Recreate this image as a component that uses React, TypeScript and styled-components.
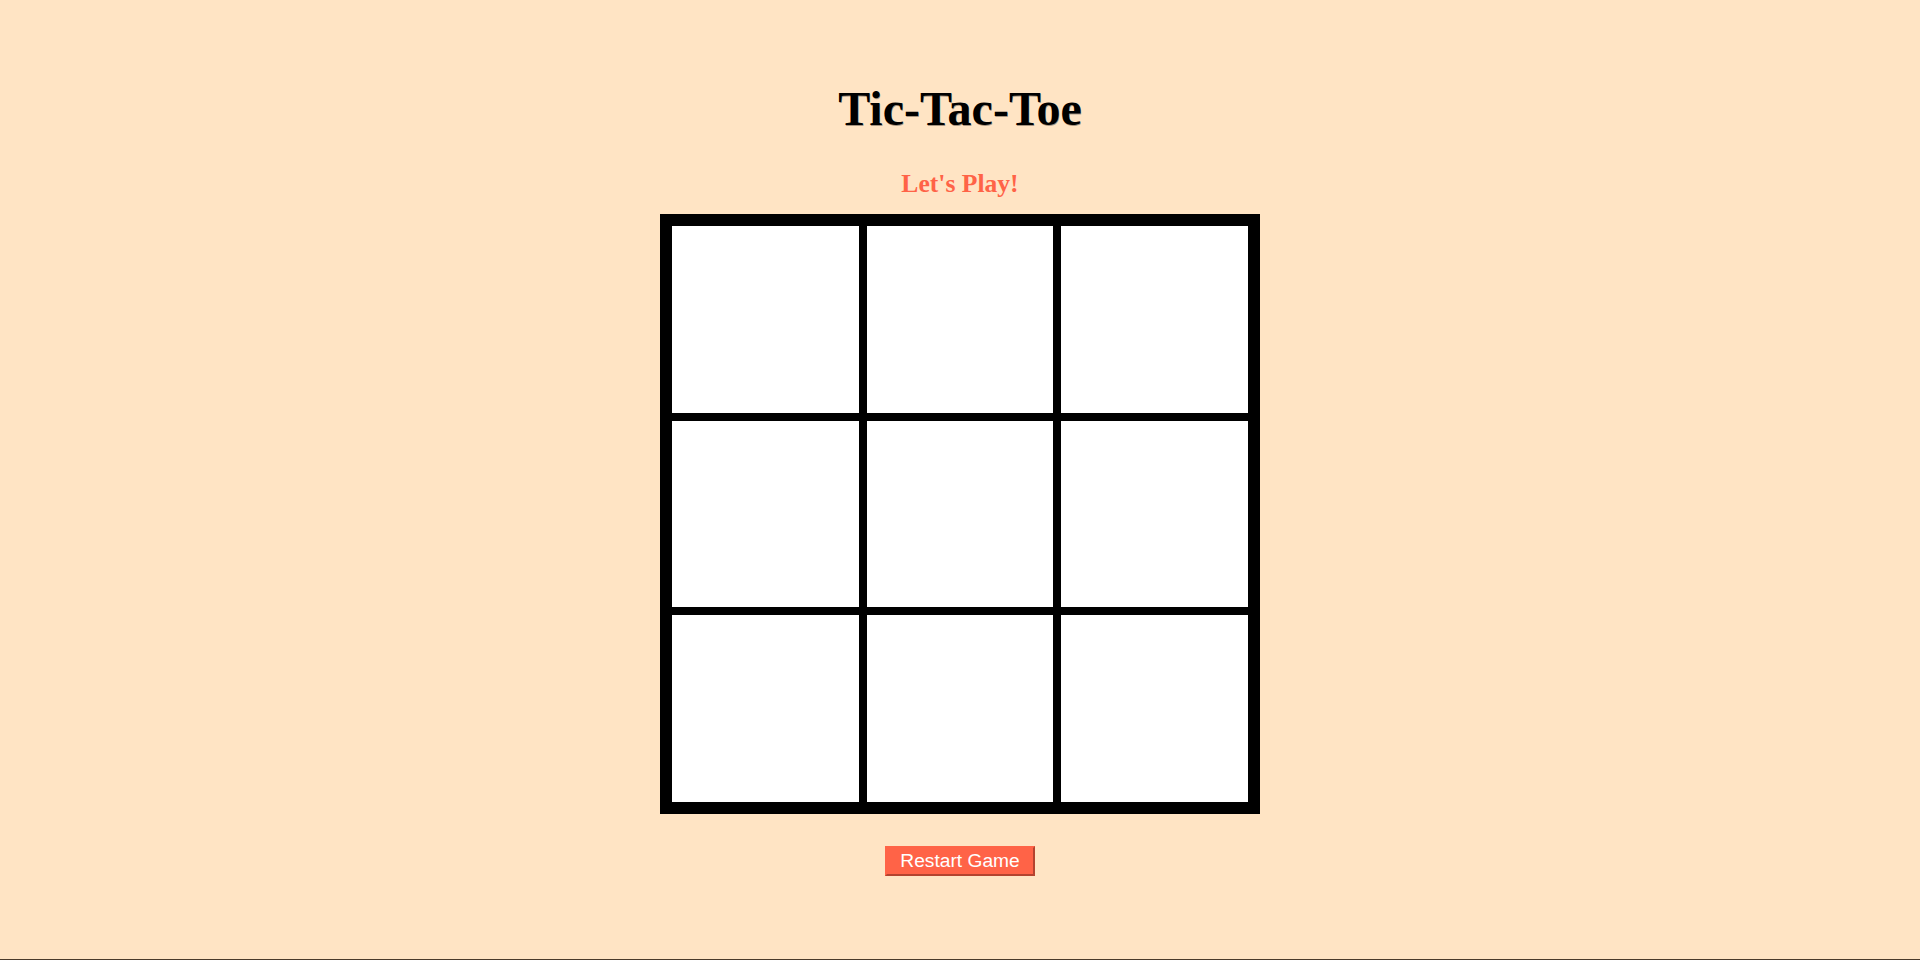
import React, { useState } from "react";
import styled, { createGlobalStyle } from "styled-components";

const GlobalStyle = createGlobalStyle`
  html, body {
    margin: 0;
    padding: 0;
    background: #ffe4c4;
  }
  * { box-sizing: border-box; }
`;

const Page = styled.div`
  min-height: 100vh;
  display: flex;
  flex-direction: column;
  align-items: center;
  padding-top: 81px;
  border-bottom: 1px solid #4a3a2a;
  background: #ffe4c4;
  font-family: "Liberation Serif", "Times New Roman", serif;
`;

const Title = styled.h1`
  margin: 0;
  font-size: 48px;
  line-height: 55px;
  font-weight: bold;
  color: #000;
  text-shadow: 0.5px 0.5px 0 rgba(0, 0, 0, 0.35);
`;

const Status = styled.h2`
  margin: 33px 0 0;
  font-size: 25.6px;
  line-height: 29px;
  font-weight: bold;
  color: #ff6347;
`;

const Board = styled.div`
  margin-top: 16px;
  width: 600px;
  height: 600px;
  border: 8px solid #000;
  display: grid;
  grid-template-columns: repeat(3, 1fr);
  grid-template-rows: repeat(3, 1fr);
`;

const Cell = styled.button<{ $mark: string }>`
  border: 4px solid #000;
  border-radius: 0;
  background: #fff;
  padding: 0;
  margin: 0;
  cursor: pointer;
  font-family: "Liberation Serif", serif;
  font-size: 96px;
  font-weight: bold;
  color: ${(p) => (p.$mark === "X" ? "#ff6347" : "#000")};
`;

const RestartButton = styled.button`
  margin-top: 32px;
  padding: 2px 13.5px;
  border-style: solid;
  border-width: 2px;
  border-color: #ff6347 #b4432f #b4432f #ff6347;
  border-radius: 0;
  background: #ff6347;
  color: #fff;
  font-family: "Liberation Sans", Arial, sans-serif;
  font-size: 19.2px;
  line-height: 22px;
  cursor: pointer;
`;

const lines = [
  [0, 1, 2], [3, 4, 5], [6, 7, 8],
  [0, 3, 6], [1, 4, 7], [2, 5, 8],
  [0, 4, 8], [2, 4, 6],
];

function winnerOf(cells: string[]): string | null {
  for (const [a, b, c] of lines) {
    if (cells[a] && cells[a] === cells[b] && cells[a] === cells[c]) return cells[a];
  }
  return null;
}

export default function App() {
  const [cells, setCells] = useState<string[]>(Array(9).fill(""));
  const [turn, setTurn] = useState<"X" | "O">("X");
  const winner = winnerOf(cells);
  const full = cells.every((c) => c);

  let status = "Let's Play!";
  if (winner) status = `${winner} Wins!`;
  else if (full) status = "It's a Draw!";
  else if (cells.some((c) => c)) status = `${turn}'s Turn`;

  const play = (i: number) => {
    if (cells[i] || winner) return;
    const next = cells.slice();
    next[i] = turn;
    setCells(next);
    setTurn(turn === "X" ? "O" : "X");
  };

  const restart = () => {
    setCells(Array(9).fill(""));
    setTurn("X");
  };

  return (
    <>
      <GlobalStyle />
      <Page>
        <Title>Tic-Tac-Toe</Title>
        <Status>{status}</Status>
        <Board>
          {cells.map((c, i) => (
            <Cell key={i} $mark={c} onClick={() => play(i)}>
              {c}
            </Cell>
          ))}
        </Board>
        <RestartButton onClick={restart}>Restart Game</RestartButton>
      </Page>
    </>
  );
}
